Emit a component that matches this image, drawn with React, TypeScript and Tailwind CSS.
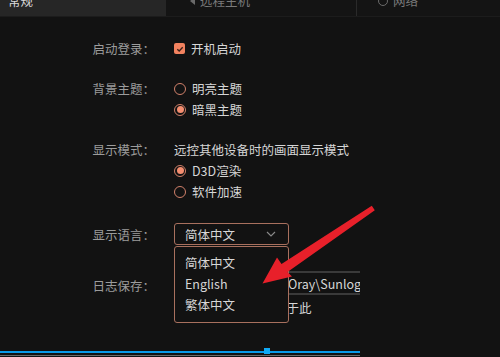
import React from "react";

const font = { fontFamily: '"Noto Sans CJK SC", "Noto Sans", sans-serif' };

function Radio({ checked, label }: { checked?: boolean; label: string }) {
  return (
    <div className="flex items-center h-[21px]">
      <span className="w-[12px] h-[12px] rounded-full border-[1.5px] border-[#d0806a] flex items-center justify-center">
        {checked && <span className="w-[7px] h-[7px] rounded-full bg-[#f58e70]" />}
      </span>
      <span className="ml-[6px] text-[#d6d6d6]">{label}</span>
    </div>
  );
}

function Row({ label, children, className = "" }: { label: string; children: React.ReactNode; className?: string }) {
  return (
    <div className={"flex " + className}>
      <div className="w-[155px] text-right text-[#9c9c9c] h-[21px] leading-[21px] shrink-0">{label}</div>
      <div className="ml-[19px] flex-1 min-w-0">{children}</div>
    </div>
  );
}

export default function App() {
  return (
    <div
      className="relative w-[500px] h-[357px] bg-[#121212] overflow-hidden flex flex-col text-[12.5px] leading-[21px]"
      style={font}
    >
      {/* tabs */}
      <div className="-mt-[15px] h-[32px] flex border-b border-[#1c1c1c] shrink-0">
        <div className="w-[166px] bg-[#262626] flex items-center pl-[8px] text-[#d8d8d8]">常规</div>
        <div className="w-[191px] bg-[#141414] border-r border-[#2a2a2a] flex items-center pl-[24px] text-[#7a7a7a]">
          <span className="w-0 h-0 border-y-[4px] border-y-transparent border-r-[5px] border-r-[#6a6a6a] mr-[5px]" />
          远程主机
        </div>
        <div className="flex-1 bg-[#141414] flex items-center pl-[21px] text-[#7a7a7a]">
          <span className="w-[10px] h-[10px] rounded-full border-[1.5px] border-[#6a6a6a] mr-[5px]" />
          网络
        </div>
      </div>

      {/* content */}
      <div className="w-[360px] overflow-hidden flex-1 flex flex-col">
        <Row label="启动登录：" className="mt-[21px]">
          <div className="flex items-center h-[21px]">
            <span className="w-[11px] h-[11px] rounded-[2px] bg-[#f2825f] flex items-center justify-center">
              <svg width="8" height="8" viewBox="0 0 8 8">
                <path d="M1.3 4.2 L3.2 6 L6.7 2.2" fill="none" stroke="#3a2018" strokeWidth="1.3" />
              </svg>
            </span>
            <span className="ml-[6px] text-[#d6d6d6]">开机启动</span>
          </div>
        </Row>

        <Row label="背景主题：" className="mt-[19px]">
          <Radio label="明亮主题" />
          <Radio checked label="暗黑主题" />
        </Row>

        <Row label="显示模式：" className="mt-[19px]">
          <div className="text-[#d6d6d6] h-[21px] whitespace-nowrap">远控其他设备时的画面显示模式</div>
          <Radio checked label="D3D渲染" />
          <Radio label="软件加速" />
        </Row>

        <Row label="显示语言：" className="mt-[21px] items-center">
          <div className="relative w-[115px]">
            <div className="h-[22px] border border-[#a8705e] rounded-[3px] flex items-center pl-[10px] pr-[12px] text-[#d6d6d6]">
              <span className="flex-1">简体中文</span>
              <svg width="10" height="6" viewBox="0 0 10 6">
                <path d="M1 1 L5 5 L9 1" fill="none" stroke="#8a8a8a" strokeWidth="1.1" />
              </svg>
            </div>
            <div className="absolute left-0 top-[23px] w-full h-[77px] bg-[#121212] border border-[#a8705e] rounded-[3px] z-10 pt-[5px] pl-[10px] text-[#d6d6d6]">
              <div className="h-[21px]">简体中文</div>
              <div className="h-[21px]">English</div>
              <div className="h-[21px]">繁体中文</div>
            </div>
          </div>
        </Row>

        <Row label="日志保存：" className="mt-[30px]">
          <div className="-mt-[4px] h-[24px] border-y-2 border-[#3a3a3a] flex items-center whitespace-nowrap text-[#d6d6d6] overflow-hidden">
            <span className="inline-block w-[114px] overflow-hidden shrink-0">C:\ProgramData\</span>
            <span>Oray\SunloginClient\log</span>
          </div>
          <div className="mt-[2px] whitespace-nowrap text-[#d6d6d6]">所有日志文件将保存于此</div>
        </Row>

        {/* bottom splitter */}
        <div className="relative mt-auto mb-[1px] shrink-0">
          <div className="h-[2px] bg-[#0a9ae8]" />
          <div className="h-[2px]" />
          <div className="h-[1px] bg-[#6a6a6a]" />
          <div className="absolute left-[264px] -top-[3px] w-[6px] h-[6px] bg-[#10aaf5]" />
        </div>
      </div>

      {/* annotation arrow */}
      <svg className="absolute inset-0 z-20 pointer-events-none" width="500" height="357" viewBox="0 0 500 357">
        <polygon
          points="371.8,205.8 374.8,210.2 287.5,272 292,276.5 262.5,283.5 277,257.5 281.5,264"
          fill="#e8202a"
        />
      </svg>
    </div>
  );
}
